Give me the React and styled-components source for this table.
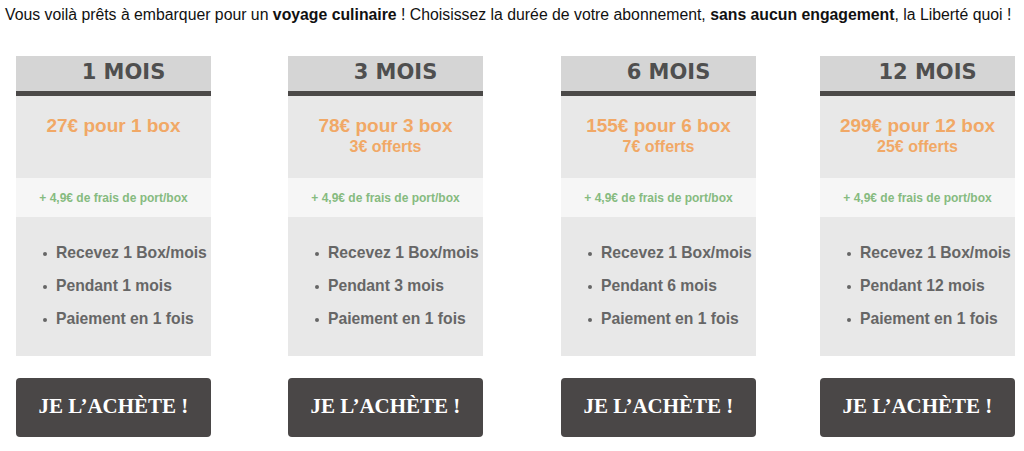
import styled, { createGlobalStyle } from "styled-components"

const GlobalStyle = createGlobalStyle`
  body {
    margin: 0;
    background: #fff;
    font-family: "Liberation Sans", Arial, sans-serif;
  }
`

const plans = [
  { months: 1, price: "27€ pour 1 box", offer: null, offset: 16 },
  { months: 3, price: "78€ pour 3 box", offer: "3€ offerts", offset: 77 },
  { months: 6, price: "155€ pour 6 box", offer: "7€ offerts", offset: 78 },
  { months: 12, price: "299€ pour 12 box", offer: "25€ offerts", offset: 64 },
]

function Plan({ months, price, offer, offset }) {
  return (
    <Card $offset={offset}>
      <Head>{months} MOIS</Head>
      <Price>
        <Amount>{price}</Amount>
        {offer && <Offer>{offer}</Offer>}
      </Price>
      <Shipping>+ 4,9€ de frais de port/box</Shipping>
      <Features>
        <li>Recevez 1 Box/mois</li>
        <li>Pendant {months} mois</li>
        <li>Paiement en 1 fois</li>
      </Features>
      <BuyButton>JE L’ACHÈTE !</BuyButton>
    </Card>
  )
}

export default function App() {
  return (
    <Page>
      <GlobalStyle />
      <Intro>
        Vous voilà prêts à embarquer pour un <b>voyage culinaire</b> ! Choisissez la durée de votre abonnement, <b>sans aucun engagement</b>, la Liberté quoi !
      </Intro>
      <Plans>
        {plans.map(p => (
          <Plan key={p.months} {...p} />
        ))}
      </Plans>
    </Page>
  )
}

const Page = styled.div`
  width: 1024px;
  height: 451px;
  overflow: hidden;
`

const Intro = styled.p`
  margin: 0;
  padding: 5px 0 0 5px;
  font-size: 15.8px;
  line-height: 20px;
  color: #111;
  white-space: nowrap;

  b {
    font-weight: bold;
  }
`

const Plans = styled.div`
  display: flex;
  margin-top: 31px;
`

const Card = styled.div`
  width: 195px;
  margin-left: ${props => props.$offset}px;
  display: flex;
  flex-direction: column;
`

const Head = styled.div`
  height: 35px;
  line-height: 33px;
  padding-left: 20px;
  background: #d5d5d5;
  border-bottom: 5px solid #4b4948;
  text-align: center;
  font-family: "DejaVu Sans", Verdana, sans-serif;
  font-weight: bold;
  font-size: 21px;
  color: #4f4f4f;
`

const Price = styled.div`
  height: 82px;
  box-sizing: border-box;
  padding-top: 20px;
  background: #e8e8e8;
  text-align: center;
  color: #f1a866;
  font-weight: bold;
`

const Amount = styled.div`
  font-size: 19px;
  line-height: 20px;
`

const Offer = styled.div`
  font-size: 16px;
  line-height: 22px;
`

const Shipping = styled.div`
  height: 39px;
  line-height: 40px;
  background: #f6f6f6;
  text-align: center;
  font-size: 12px;
  font-weight: bold;
  color: #86bb80;
`

const Features = styled.ul`
  list-style: none;
  margin: 0;
  height: 139px;
  box-sizing: border-box;
  padding: 19px 0 0 27px;
  background: #e8e8e8;

  li {
    display: flex;
    align-items: center;
    font-size: 15.7px;
    line-height: 33px;
    font-weight: bold;
    color: #666;
    white-space: nowrap;
  }

  li::before {
    content: "";
    width: 4px;
    height: 4px;
    border-radius: 50%;
    background: #666;
    margin: 3px 9px 0 0;
  }
`

const BuyButton = styled.div`
  margin-top: 22px;
  height: 59px;
  line-height: 57px;
  background: #4a4747;
  border-radius: 4px;
  text-align: center;
  color: #fff;
  font-family: "Liberation Serif", "Times New Roman", serif;
  font-weight: bold;
  font-size: 21px;
  cursor: pointer;
`
